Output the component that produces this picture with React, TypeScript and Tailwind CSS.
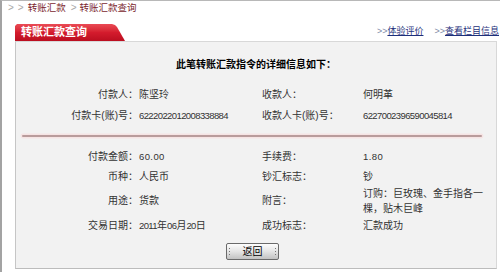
import React from "react";

const num = "font-['Liberation_Sans',sans-serif] text-[9.5px] tracking-[-0.6px]";
const numWide = "font-['Liberation_Sans',sans-serif] text-[9.5px] tracking-[0.4px]";

function Grip() {
  return (
    <span className="flex flex-col gap-[2px]">
      <span className="w-[1px] h-[1px] bg-[#777]" />
      <span className="w-[1px] h-[1px] bg-[#777]" />
      <span className="w-[1px] h-[1px] bg-[#777]" />
    </span>
  );
}

function Row({
  h,
  a,
  b,
  c,
  d,
}: {
  h: string;
  a: React.ReactNode;
  b: React.ReactNode;
  c: React.ReactNode;
  d: React.ReactNode;
}) {
  return (
    <div className={"grid grid-cols-[122px_124px_101px_1fr] items-center " + h}>
      <div className="text-right">{a}</div>
      <div className="pl-[1px]">{b}</div>
      <div>{c}</div>
      <div>{d}</div>
    </div>
  );
}

export default function App() {
  return (
    <div className="w-[500px] h-[272px] bg-white border-l-2 border-l-[#a3a3a3] border-t border-t-[#b8b8b8] overflow-hidden font-['Liberation_Sans','Noto_Sans_CJK_SC',sans-serif]">
      {/* breadcrumb */}
      <div className="h-[13px] flex items-center pl-[6px] text-[9.5px] text-[#7b1f2e] leading-none">
        <span className="text-[#a8a8a8] text-[10px]">&gt;</span>
        <span className="text-[#a8a8a8] text-[10px] ml-[4px]">&gt;</span>
        <span className="ml-[4px]">转账汇款</span>
        <span className="text-[#a8a8a8] text-[10px] ml-[5px]">&gt;</span>
        <span className="ml-[3px]">转账汇款查询</span>
      </div>

      {/* tab row */}
      <div className="ml-[13px] mr-[3px] mt-[10px] h-[17px] flex items-stretch justify-between">
        <div className="w-[110px] bg-linear-to-b from-[#ea4a55] via-[#d41b2d] to-[#bb0e20] [clip-path:polygon(0_2px,2px_0,97px_0,100px_1px,102px_3px,110px_17px,0_17px)] flex items-center pl-[6px] text-white text-[11px] font-bold leading-none">
          转账汇款查询
        </div>
        <div className="flex items-center pb-[3px] -mr-[2px] text-[9px] leading-none">
          <span className="text-[#7d8aa6]">&gt;&gt;</span>
          <span className="text-[#1d2f7a] underline">体验评价</span>
          <span className="text-[#7d8aa6] ml-[11px]">&gt;&gt;</span>
          <span className="text-[#1d2f7a] underline">查看栏目信息</span>
        </div>
      </div>

      {/* panel */}
      <div className="ml-[13px] mr-[3px] h-[228px] bg-[#f2f2f2] border border-[#d8d8d8] border-l-[#c6c6c6] border-b-[#bcbcbc] text-[10px] text-[#333] leading-none">
        <div className="mt-[11px] h-[24px] flex items-center justify-center font-bold text-black">
          此笔转账汇款指令的详细信息如下：
        </div>
        <div className="h-[7px]" />
        <Row h="h-[21px]" a="付款人：" b="陈坚玲" c="收款人：" d="何明革" />
        <Row
          h="h-[21px]"
          a="付款卡(账)号："
          b={<span className={num}>6222022012008338884</span>}
          c="收款人卡(账)号："
          d={<span className={num}>6227002396590045814</span>}
        />
        <div className="h-[20px] flex items-center pl-[6px]">
          <div className="w-[460px] h-[2px] rounded-full bg-[#b99c9c] shadow-[0_0_0_1.5px_#f6e4e4]" />
        </div>
        <Row
          h="h-[21px]"
          a="付款金额："
          b={<span className={numWide}>60.00</span>}
          c="手续费："
          d={<span className={numWide}>1.80</span>}
        />
        <Row h="h-[19px]" a="币种：" b="人民币" c="钞汇标志：" d="钞" />
        <Row
          h="h-[30px]"
          a="用途："
          b="货款"
          c="附言："
          d={
            <div className="leading-[15px]">
              <div>订购：巨玫瑰、金手指各一</div>
              <div>棵，贴木巨峰</div>
            </div>
          }
        />
        <Row
          h="h-[20px]"
          a="交易日期："
          b={
            <span>
              <span className={num}>2011</span>年<span className={num}>06</span>月
              <span className={num}>20</span>日
            </span>
          }
          c="成功标志："
          d="汇款成功"
        />
        <div className="mt-[7px] pl-[210px]">
          <button className="relative w-[53px] h-[17px] border border-[#6a6a6a] rounded-[2px] bg-linear-to-b from-[#fdfdfd] via-[#e4e4e4] to-[#c2c2c2] text-[10px] text-black flex items-center justify-center leading-none">
            <span className="absolute left-[2px] top-[4px]">
              <Grip />
            </span>
            返回
            <span className="absolute right-[2px] top-[4px]">
              <Grip />
            </span>
          </button>
        </div>
      </div>
    </div>
  );
}
